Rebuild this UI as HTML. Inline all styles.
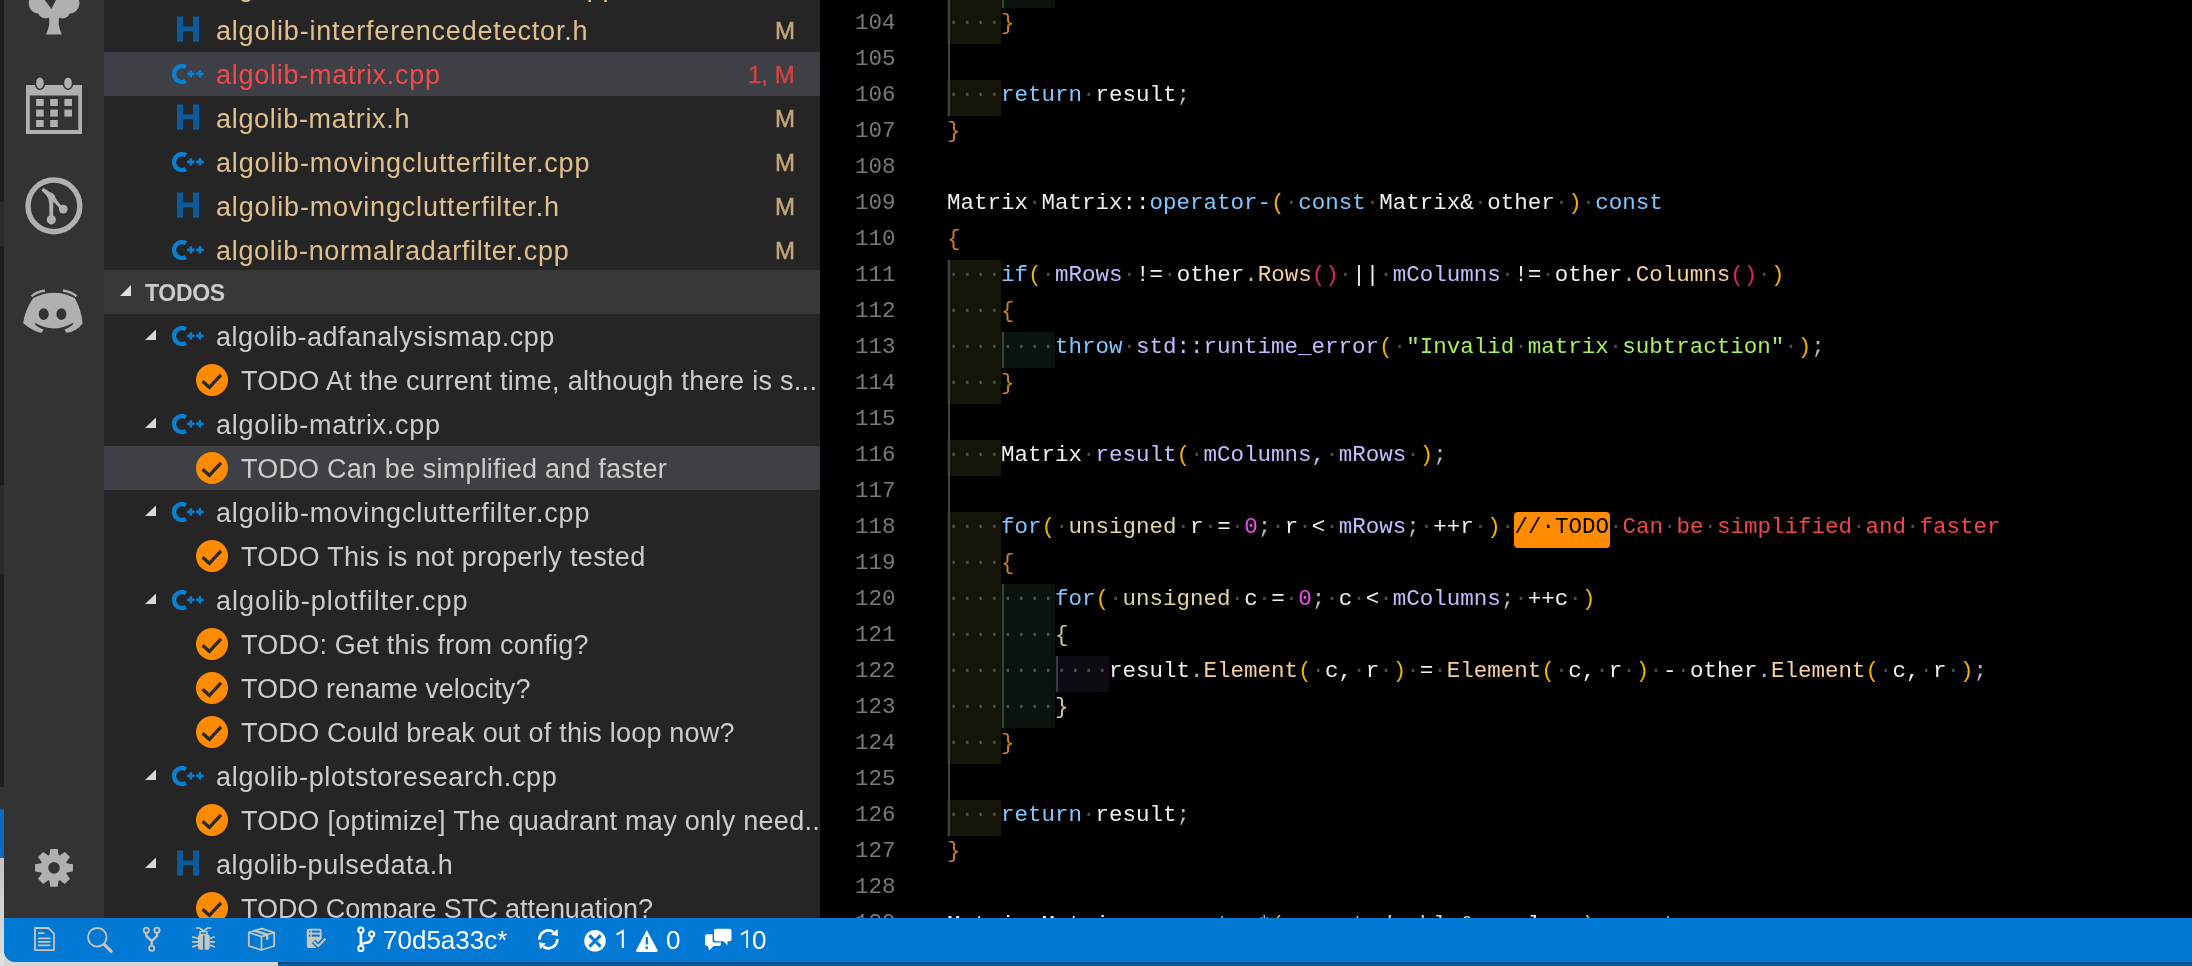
<!DOCTYPE html>
<html><head><meta charset="utf-8">
<style>
html,body{margin:0;padding:0;width:2192px;height:966px;overflow:hidden;background:#d6d6d6;}
*{box-sizing:border-box;}
#strip{position:absolute;left:0;top:0;width:4px;height:966px;background:#1e1e1e;}
#act{position:absolute;left:4px;top:0;width:100px;height:918px;background:#333333;}
#side{position:absolute;left:104px;top:0;width:716px;height:918px;background:#252526;overflow:hidden;}
#ed{position:absolute;left:820px;top:0;width:1372px;height:918px;background:#000;overflow:hidden;}
#status{position:absolute;left:4px;top:918px;width:2188px;height:44px;background:#0078d4;border-bottom-left-radius:11px;overflow:hidden;}
#under{position:absolute;left:278px;top:962px;width:1914px;height:4px;background:linear-gradient(#00426f 0px,#004f8a 1px,#005ea6 2px);}
.ic{position:absolute;}
svg{display:block;}
.cl,.tx,.ln,.bd,.ht,.st{will-change:transform;}
/* sidebar (coords relative to page, so subtract 104) */
#sidein{position:absolute;left:-104px;top:0;width:820px;height:918px;}
.sel{position:absolute;left:104px;width:716px;height:44px;background:#3f3f46;}
.tx{position:absolute;height:44px;line-height:44px;padding-top:0.5px;font-family:"Liberation Sans",sans-serif;font-size:27px;white-space:nowrap;}
.fn{color:#e2c08d;}
.red{color:#f04b4b;}
.tf,.tt{color:#cccccc;}
.bd{position:absolute;right:25px;height:44px;line-height:44px;padding-top:1px;font-family:"Liberation Sans",sans-serif;font-size:24px;color:#c4a676;white-space:nowrap;text-align:right;-webkit-text-stroke:0.5px currentColor;}
.redb{color:#cb4444;}
.hdr{position:absolute;left:104px;top:270px;width:716px;height:44px;background:#383838;}
.ht{position:absolute;left:40.5px;top:0;height:44px;line-height:44px;padding-top:1px;font-family:"Liberation Sans",sans-serif;font-size:23px;font-weight:bold;color:#cccccc;letter-spacing:-0.3px;}
/* editor */
#edin{position:absolute;left:-820px;top:0;width:2192px;height:918px;}
.ib{position:absolute;height:36px;}
.gd{position:absolute;width:2px;}
.ln{position:absolute;left:820px;width:75.5px;text-align:right;height:36px;line-height:36px;margin-top:-3px;font-family:"Liberation Mono",monospace;font-size:22.5px;color:#7a7a7a;}
.cl{position:absolute;left:947px;height:36px;line-height:36px;margin-top:-3px;font-family:"Liberation Mono",monospace;font-size:22.5px;white-space:pre;color:#f0f0f0;}
.ws{color:#4c4c4c;}
.tb{background:#ff8c00;color:#000;border-radius:4px;display:inline-block;height:36px;vertical-align:top;padding-right:1.5px;margin-right:-1.5px;}
.tb{position:relative;top:3px;line-height:31px;}
/* status bar */
.st{position:absolute;top:0;height:44px;line-height:44px;font-family:"Liberation Sans",sans-serif;font-size:26px;color:#ffffff;white-space:nowrap;}
</style></head>
<body>
<div id="strip">
  <div style="position:absolute;left:0;top:202px;width:4px;height:44px;background:#2c2c2a"></div>
  <div style="position:absolute;left:0;top:485px;width:4px;height:89px;background:#2a2a2a"></div>
  <div style="position:absolute;left:0;top:787px;width:4px;height:22px;background:#333333"></div>
  <div style="position:absolute;left:0;top:809px;width:4px;height:49px;background:#0a6cbf"></div>
  <div style="position:absolute;left:0;top:858px;width:4px;height:108px;background:linear-gradient(#c4c4c4,#e0e0e0)"></div>
</div>
<div id="under"></div>
<div id="act">
  <!-- tree icon (partially visible) -->
  <svg class="ic" style="left:0;top:0" width="100" height="40" viewBox="4 0 100 40">
    <g fill="#b0b0b0">
      <circle cx="38.8" cy="3.5" r="10.1"/>
      <circle cx="69.3" cy="3.5" r="10.1"/>
      <circle cx="45.5" cy="10.3" r="8.1"/>
      <circle cx="62.5" cy="10.3" r="8.1"/>
      <rect x="38" y="-8" width="32" height="18"/><rect x="46" y="8" width="16" height="9.5"/>
      <path d="M48.6 16.5 Q51 24 46 34.4 L61.8 34.4 Q57 24 59.4 16.5 Z"/>
    </g>
    <path fill="#333333" d="M43.9 -1 L56.4 -1 L51.5 8.9 Z"/>
  </svg>
  <!-- calendar -->
  <svg class="ic" style="left:0;top:70px" width="100" height="70" viewBox="4 70 100 70">
    <path fill="#b0b0b0" fill-rule="evenodd" d="M26 85h56v49.1h-56z M29.8 95.4v34.7h48.5v-34.7z"/>
    <rect x="36.1" y="99" width="7.6" height="7" fill="#b0b0b0"/>
    <rect x="50.2" y="99" width="7.6" height="7" fill="#b0b0b0"/>
    <rect x="64.4" y="99" width="7.6" height="7" fill="#b0b0b0"/>
    <rect x="36.1" y="109.6" width="7.6" height="7" fill="#b0b0b0"/>
    <rect x="50.2" y="109.6" width="7.6" height="7" fill="#b0b0b0"/>
    <rect x="64.4" y="109.6" width="7.6" height="7" fill="#b0b0b0"/>
    <rect x="36.1" y="120" width="7.6" height="7" fill="#b0b0b0"/>
    <rect x="50.2" y="120" width="7.6" height="7" fill="#b0b0b0"/>
    <ellipse cx="39.9" cy="83" rx="5.3" ry="7" fill="#333333"/>
    <ellipse cx="68" cy="83" rx="5.3" ry="7" fill="#333333"/>
    <ellipse cx="39.9" cy="83" rx="3.8" ry="5.5" fill="#b0b0b0"/>
    <ellipse cx="68" cy="83" rx="3.8" ry="5.5" fill="#b0b0b0"/>
  </svg>
  <!-- circle Y icon -->
  <svg class="ic" style="left:0;top:170px" width="100" height="70" viewBox="4 170 100 70">
    <circle cx="53.9" cy="205.9" r="25.9" fill="none" stroke="#b0b0b0" stroke-width="5.4"/>
    <path fill="#b0b0b0" d="M41.6 190.5 Q42 187.8 44.2 188.3 L49.5 192 Q54.5 193.2 55.5 197.5 L57 200.5 L61 205.2 L64.5 207.2 L60.5 211.2 Q59 206.5 55 203.2 L53.2 201.8 L53.2 217 L49.4 217 L49.2 203.5 Q49 199 46.8 196 Z"/>
    <circle cx="51.3" cy="219.8" r="4.6" fill="#b0b0b0"/>
    <circle cx="63.3" cy="209.1" r="4.4" fill="#b0b0b0"/>
  </svg>
  <!-- discord -->
  <svg class="ic" style="left:0;top:280px" width="100" height="60" viewBox="4 280 100 60">
    <path fill="none" stroke="#b0b0b0" stroke-width="2.3" d="M31.5 296.3 Q36.5 291.8 45 290.5 M76.5 296.3 Q71.5 291.8 63 290.5"/>
    <path fill="#b0b0b0" stroke="#333333" stroke-width="1.1" fill-rule="evenodd" d="M33 297.5 C41 293.5 47 292.2 54 292.2 C61 292.2 67 293.5 75 297.5 C80 306 82.6 316 83.2 323.5 C80.5 327.5 74.5 332 66.5 333.6 L63.5 329.5 C67.5 328 71 326 73 323.5 C66.5 327.5 60.5 329 54 329 C47.5 329 41.5 327.5 35 323.5 C37 326 40.5 328 44.5 329.5 L41.5 333.6 C33.5 332 27.5 327.5 22.5 323.5 C23.5 316 27 306 33 297.5 Z M43.7 308.9 a4.5 5.3 0 1 0 0.01 0 Z M61.4 308.9 a4.5 5.3 0 1 0 0.01 0 Z"/>
  </svg>
  <!-- gear -->
  <svg class="ic" style="left:0;top:840px" width="100" height="60" viewBox="4 840 100 60">
    <path fill="#b0b0b0" fill-rule="evenodd" d="M49.40 855.10 L50.30 848.96 L57.70 848.96 L58.60 855.10 L59.80 855.60 L64.78 851.89 L70.01 857.12 L66.30 862.10 L66.80 863.30 L72.94 864.20 L72.94 871.60 L66.80 872.50 L66.30 873.70 L70.01 878.68 L64.78 883.91 L59.80 880.20 L58.60 880.70 L57.70 886.84 L50.30 886.84 L49.40 880.70 L48.20 880.20 L43.22 883.91 L37.99 878.68 L41.70 873.70 L41.20 872.50 L35.06 871.60 L35.06 864.20 L41.20 863.30 L41.70 862.10 L37.99 857.12 L43.22 851.89 L48.20 855.60 Z M59.8 867.9 A5.8 5.8 0 1 0 48.2 867.9 A5.8 5.8 0 1 0 59.8 867.9 Z"/>
  </svg>
</div>
<div id="side"><div id="sidein">
<div class="sel" style="top:52px"></div>
<div class="sel" style="top:446px"></div>
<svg class="ic" style="left:170px;top:-36px" width="40" height="44" viewBox="0 0 40 44"><path fill="none" stroke="#0a7fd0" stroke-width="4.5" d="M15.95 15.26 A7.9 7.9 0 1 0 15.95 28.94"/><path fill="#0a7fd0" d="M17.1 20.6h2.4v-2.4h2.6v2.4h2.4v2.6h-2.4v2.4h-2.6v-2.4h-2.4z M26.2 20.6h2.4v-2.4h2.6v2.4h2.4v2.6h-2.4v2.4h-2.6v-2.4h-2.4z"/></svg>
<div class="tx fn" style="top:-36px;left:216px;letter-spacing:0.803px">algolib-interferencedetector.cpp</div>
<div class="bd" style="top:-36px">M</div>
<svg class="ic" style="left:170px;top:8px" width="36" height="44" viewBox="0 0 36 44"><path fill="#0b5b9c" d="M7 8.5h6v10h10v-10h6v25.2h-6v-10.4h-10v10.4h-6z"/></svg>
<div class="tx fn" style="top:8px;left:216px;letter-spacing:0.803px">algolib-interferencedetector.h</div>
<div class="bd" style="top:8px">M</div>
<svg class="ic" style="left:170px;top:52px" width="40" height="44" viewBox="0 0 40 44"><path fill="none" stroke="#0a7fd0" stroke-width="4.5" d="M15.95 15.26 A7.9 7.9 0 1 0 15.95 28.94"/><path fill="#0a7fd0" d="M17.1 20.6h2.4v-2.4h2.6v2.4h2.4v2.6h-2.4v2.4h-2.6v-2.4h-2.4z M26.2 20.6h2.4v-2.4h2.6v2.4h2.4v2.6h-2.4v2.4h-2.6v-2.4h-2.4z"/></svg>
<div class="tx fn red" style="top:52px;left:216px;letter-spacing:0.736px">algolib-matrix.cpp</div>
<div class="bd redb" style="top:52px">1, M</div>
<svg class="ic" style="left:170px;top:96px" width="36" height="44" viewBox="0 0 36 44"><path fill="#0b5b9c" d="M7 8.5h6v10h10v-10h6v25.2h-6v-10.4h-10v10.4h-6z"/></svg>
<div class="tx fn" style="top:96px;left:216px;letter-spacing:0.695px">algolib-matrix.h</div>
<div class="bd" style="top:96px">M</div>
<svg class="ic" style="left:170px;top:140px" width="40" height="44" viewBox="0 0 40 44"><path fill="none" stroke="#0a7fd0" stroke-width="4.5" d="M15.95 15.26 A7.9 7.9 0 1 0 15.95 28.94"/><path fill="#0a7fd0" d="M17.1 20.6h2.4v-2.4h2.6v2.4h2.4v2.6h-2.4v2.4h-2.6v-2.4h-2.4z M26.2 20.6h2.4v-2.4h2.6v2.4h2.4v2.6h-2.4v2.4h-2.6v-2.4h-2.4z"/></svg>
<div class="tx fn" style="top:140px;left:216px;letter-spacing:0.844px">algolib-movingclutterfilter.cpp</div>
<div class="bd" style="top:140px">M</div>
<svg class="ic" style="left:170px;top:184px" width="36" height="44" viewBox="0 0 36 44"><path fill="#0b5b9c" d="M7 8.5h6v10h10v-10h6v25.2h-6v-10.4h-10v10.4h-6z"/></svg>
<div class="tx fn" style="top:184px;left:216px;letter-spacing:0.834px">algolib-movingclutterfilter.h</div>
<div class="bd" style="top:184px">M</div>
<svg class="ic" style="left:170px;top:228px" width="40" height="44" viewBox="0 0 40 44"><path fill="none" stroke="#0a7fd0" stroke-width="4.5" d="M15.95 15.26 A7.9 7.9 0 1 0 15.95 28.94"/><path fill="#0a7fd0" d="M17.1 20.6h2.4v-2.4h2.6v2.4h2.4v2.6h-2.4v2.4h-2.6v-2.4h-2.4z M26.2 20.6h2.4v-2.4h2.6v2.4h2.4v2.6h-2.4v2.4h-2.6v-2.4h-2.4z"/></svg>
<div class="tx fn" style="top:228px;left:216px;letter-spacing:0.697px">algolib-normalradarfilter.cpp</div>
<div class="bd" style="top:228px">M</div>
<div class="hdr"><svg class="ic" style="left:15px;top:0" width="14" height="44" viewBox="0 0 14 44"><path fill="#e0e0e0" d="M12 15V26H1z"/></svg><span class="ht">TODOS</span></div>
<svg class="ic" style="left:144px;top:314px" width="14" height="44" viewBox="0 0 14 44"><path fill="#d8d8d8" d="M12 15.4V26H1z"/></svg>
<svg class="ic" style="left:170px;top:314px" width="40" height="44" viewBox="0 0 40 44"><path fill="none" stroke="#0a7fd0" stroke-width="4.5" d="M15.95 15.26 A7.9 7.9 0 1 0 15.95 28.94"/><path fill="#0a7fd0" d="M17.1 20.6h2.4v-2.4h2.6v2.4h2.4v2.6h-2.4v2.4h-2.6v-2.4h-2.4z M26.2 20.6h2.4v-2.4h2.6v2.4h2.4v2.6h-2.4v2.4h-2.6v-2.4h-2.4z"/></svg>
<div class="tx tf" style="top:314px;left:216px;letter-spacing:0.504px">algolib-adfanalysismap.cpp</div>
<svg class="ic" style="left:194px;top:358px" width="36" height="44" viewBox="0 0 36 44"><circle cx="18" cy="22" r="16" fill="#ff8c00"/><path fill="none" stroke="#2b2b2b" stroke-width="3.4" d="M8.6 23.2 L15.4 29.4 L27 16.8"/></svg>
<div class="tx tt" style="top:358px;left:241px;letter-spacing:0.29px">TODO At the current time, although there is s...</div>
<svg class="ic" style="left:144px;top:402px" width="14" height="44" viewBox="0 0 14 44"><path fill="#d8d8d8" d="M12 15.4V26H1z"/></svg>
<svg class="ic" style="left:170px;top:402px" width="40" height="44" viewBox="0 0 40 44"><path fill="none" stroke="#0a7fd0" stroke-width="4.5" d="M15.95 15.26 A7.9 7.9 0 1 0 15.95 28.94"/><path fill="#0a7fd0" d="M17.1 20.6h2.4v-2.4h2.6v2.4h2.4v2.6h-2.4v2.4h-2.6v-2.4h-2.4z M26.2 20.6h2.4v-2.4h2.6v2.4h2.4v2.6h-2.4v2.4h-2.6v-2.4h-2.4z"/></svg>
<div class="tx tf" style="top:402px;left:216px;letter-spacing:0.736px">algolib-matrix.cpp</div>
<svg class="ic" style="left:194px;top:446px" width="36" height="44" viewBox="0 0 36 44"><circle cx="18" cy="22" r="16" fill="#ff8c00"/><path fill="none" stroke="#2b2b2b" stroke-width="3.4" d="M8.6 23.2 L15.4 29.4 L27 16.8"/></svg>
<div class="tx tt" style="top:446px;left:241px;letter-spacing:0.191px">TODO Can be simplified and faster</div>
<svg class="ic" style="left:144px;top:490px" width="14" height="44" viewBox="0 0 14 44"><path fill="#d8d8d8" d="M12 15.4V26H1z"/></svg>
<svg class="ic" style="left:170px;top:490px" width="40" height="44" viewBox="0 0 40 44"><path fill="none" stroke="#0a7fd0" stroke-width="4.5" d="M15.95 15.26 A7.9 7.9 0 1 0 15.95 28.94"/><path fill="#0a7fd0" d="M17.1 20.6h2.4v-2.4h2.6v2.4h2.4v2.6h-2.4v2.4h-2.6v-2.4h-2.4z M26.2 20.6h2.4v-2.4h2.6v2.4h2.4v2.6h-2.4v2.4h-2.6v-2.4h-2.4z"/></svg>
<div class="tx tf" style="top:490px;left:216px;letter-spacing:0.844px">algolib-movingclutterfilter.cpp</div>
<svg class="ic" style="left:194px;top:534px" width="36" height="44" viewBox="0 0 36 44"><circle cx="18" cy="22" r="16" fill="#ff8c00"/><path fill="none" stroke="#2b2b2b" stroke-width="3.4" d="M8.6 23.2 L15.4 29.4 L27 16.8"/></svg>
<div class="tx tt" style="top:534px;left:241px;letter-spacing:0.34px">TODO This is not properly tested</div>
<svg class="ic" style="left:144px;top:578px" width="14" height="44" viewBox="0 0 14 44"><path fill="#d8d8d8" d="M12 15.4V26H1z"/></svg>
<svg class="ic" style="left:170px;top:578px" width="40" height="44" viewBox="0 0 40 44"><path fill="none" stroke="#0a7fd0" stroke-width="4.5" d="M15.95 15.26 A7.9 7.9 0 1 0 15.95 28.94"/><path fill="#0a7fd0" d="M17.1 20.6h2.4v-2.4h2.6v2.4h2.4v2.6h-2.4v2.4h-2.6v-2.4h-2.4z M26.2 20.6h2.4v-2.4h2.6v2.4h2.4v2.6h-2.4v2.4h-2.6v-2.4h-2.4z"/></svg>
<div class="tx tf" style="top:578px;left:216px;letter-spacing:0.969px">algolib-plotfilter.cpp</div>
<svg class="ic" style="left:194px;top:622px" width="36" height="44" viewBox="0 0 36 44"><circle cx="18" cy="22" r="16" fill="#ff8c00"/><path fill="none" stroke="#2b2b2b" stroke-width="3.4" d="M8.6 23.2 L15.4 29.4 L27 16.8"/></svg>
<div class="tx tt" style="top:622px;left:241px;letter-spacing:0.226px">TODO: Get this from config?</div>
<svg class="ic" style="left:194px;top:666px" width="36" height="44" viewBox="0 0 36 44"><circle cx="18" cy="22" r="16" fill="#ff8c00"/><path fill="none" stroke="#2b2b2b" stroke-width="3.4" d="M8.6 23.2 L15.4 29.4 L27 16.8"/></svg>
<div class="tx tt" style="top:666px;left:241px;letter-spacing:0.015px">TODO rename velocity?</div>
<svg class="ic" style="left:194px;top:710px" width="36" height="44" viewBox="0 0 36 44"><circle cx="18" cy="22" r="16" fill="#ff8c00"/><path fill="none" stroke="#2b2b2b" stroke-width="3.4" d="M8.6 23.2 L15.4 29.4 L27 16.8"/></svg>
<div class="tx tt" style="top:710px;left:241px;letter-spacing:0.209px">TODO Could break out of this loop now?</div>
<svg class="ic" style="left:144px;top:754px" width="14" height="44" viewBox="0 0 14 44"><path fill="#d8d8d8" d="M12 15.4V26H1z"/></svg>
<svg class="ic" style="left:170px;top:754px" width="40" height="44" viewBox="0 0 40 44"><path fill="none" stroke="#0a7fd0" stroke-width="4.5" d="M15.95 15.26 A7.9 7.9 0 1 0 15.95 28.94"/><path fill="#0a7fd0" d="M17.1 20.6h2.4v-2.4h2.6v2.4h2.4v2.6h-2.4v2.4h-2.6v-2.4h-2.4z M26.2 20.6h2.4v-2.4h2.6v2.4h2.4v2.6h-2.4v2.4h-2.6v-2.4h-2.4z"/></svg>
<div class="tx tf" style="top:754px;left:216px;letter-spacing:0.697px">algolib-plotstoresearch.cpp</div>
<svg class="ic" style="left:194px;top:798px" width="36" height="44" viewBox="0 0 36 44"><circle cx="18" cy="22" r="16" fill="#ff8c00"/><path fill="none" stroke="#2b2b2b" stroke-width="3.4" d="M8.6 23.2 L15.4 29.4 L27 16.8"/></svg>
<div class="tx tt" style="top:798px;left:241px;letter-spacing:0.29px">TODO [optimize] The quadrant may only need...</div>
<svg class="ic" style="left:144px;top:842px" width="14" height="44" viewBox="0 0 14 44"><path fill="#d8d8d8" d="M12 15.4V26H1z"/></svg>
<svg class="ic" style="left:170px;top:842px" width="36" height="44" viewBox="0 0 36 44"><path fill="#0b5b9c" d="M7 8.5h6v10h10v-10h6v25.2h-6v-10.4h-10v10.4h-6z"/></svg>
<div class="tx tf" style="top:842px;left:216px;letter-spacing:0.563px">algolib-pulsedata.h</div>
<svg class="ic" style="left:194px;top:886px" width="36" height="44" viewBox="0 0 36 44"><circle cx="18" cy="22" r="16" fill="#ff8c00"/><path fill="none" stroke="#2b2b2b" stroke-width="3.4" d="M8.6 23.2 L15.4 29.4 L27 16.8"/></svg>
<div class="tx tt" style="top:886px;left:241px;letter-spacing:-0.057px">TODO Compare STC attenuation?</div>
</div></div>
<div id="ed"><div id="edin">
<div class="ib" style="left:947.0px;top:-28px;width:54.0px;background:#15150a"></div>
<div class="ib" style="left:1001.0px;top:-28px;width:54.0px;background:#0a120c"></div>
<div class="ib" style="left:947.0px;top:8px;width:54.0px;background:#15150a"></div>
<div class="ib" style="left:947.0px;top:80px;width:54.0px;background:#15150a"></div>
<div class="ib" style="left:947.0px;top:260px;width:54.0px;background:#15150a"></div>
<div class="ib" style="left:947.0px;top:296px;width:54.0px;background:#15150a"></div>
<div class="ib" style="left:947.0px;top:332px;width:54.0px;background:#15150a"></div>
<div class="ib" style="left:1001.0px;top:332px;width:54.0px;background:#0a120c"></div>
<div class="ib" style="left:947.0px;top:368px;width:54.0px;background:#15150a"></div>
<div class="ib" style="left:947.0px;top:440px;width:54.0px;background:#15150a"></div>
<div class="ib" style="left:947.0px;top:512px;width:54.0px;background:#15150a"></div>
<div class="ib" style="left:947.0px;top:548px;width:54.0px;background:#15150a"></div>
<div class="ib" style="left:947.0px;top:584px;width:54.0px;background:#15150a"></div>
<div class="ib" style="left:1001.0px;top:584px;width:54.0px;background:#0a120c"></div>
<div class="ib" style="left:947.0px;top:620px;width:54.0px;background:#15150a"></div>
<div class="ib" style="left:1001.0px;top:620px;width:54.0px;background:#0a120c"></div>
<div class="ib" style="left:947.0px;top:656px;width:54.0px;background:#15150a"></div>
<div class="ib" style="left:1001.0px;top:656px;width:54.0px;background:#0a120c"></div>
<div class="ib" style="left:1055.0px;top:656px;width:54.0px;background:#100a12"></div>
<div class="ib" style="left:947.0px;top:692px;width:54.0px;background:#15150a"></div>
<div class="ib" style="left:1001.0px;top:692px;width:54.0px;background:#0a120c"></div>
<div class="ib" style="left:947.0px;top:728px;width:54.0px;background:#15150a"></div>
<div class="ib" style="left:947.0px;top:800px;width:54.0px;background:#15150a"></div>
<div class="gd" style="left:948.0px;top:-28px;height:144px;background:#45453a"></div>
<div class="gd" style="left:948.0px;top:260px;height:576px;background:#45453a"></div>
<div class="gd" style="left:1002.0px;top:-28px;height:36px;background:#34443f"></div>
<div class="gd" style="left:1002.0px;top:332px;height:36px;background:#34443f"></div>
<div class="gd" style="left:1002.0px;top:584px;height:144px;background:#34443f"></div>
<div class="gd" style="left:1056.0px;top:656px;height:36px;background:#3a3848"></div>
<div class="ln" style="top:-28px">103</div>
<div class="cl" style="top:-28px"><span class="ws">········</span><span style="color:#d0c898">}</span></div>
<div class="ln" style="top:8px">104</div>
<div class="cl" style="top:8px"><span class="ws">····</span><span style="color:#c8802f">}</span></div>
<div class="ln" style="top:44px">105</div>
<div class="cl" style="top:44px"></div>
<div class="ln" style="top:80px">106</div>
<div class="cl" style="top:80px"><span class="ws">····</span><span style="color:#80c8ff">return</span><span class="ws">·</span><span style="color:#f0f0f0">result</span><span style="color:#b8b8b8">;</span></div>
<div class="ln" style="top:116px">107</div>
<div class="cl" style="top:116px"><span style="color:#c8802f">}</span></div>
<div class="ln" style="top:152px">108</div>
<div class="cl" style="top:152px"></div>
<div class="ln" style="top:188px">109</div>
<div class="cl" style="top:188px"><span style="color:#f0f0f0">Matrix</span><span class="ws">·</span><span style="color:#f0f0f0">Matrix::</span><span style="color:#80c8ff">operator-</span><span style="color:#f0b400">(</span><span class="ws">·</span><span style="color:#80c8ff">const</span><span class="ws">·</span><span style="color:#f0f0f0">Matrix&amp;</span><span class="ws">·</span><span style="color:#f0f0f0">other</span><span class="ws">·</span><span style="color:#f0b400">)</span><span class="ws">·</span><span style="color:#80c8ff">const</span></div>
<div class="ln" style="top:224px">110</div>
<div class="cl" style="top:224px"><span style="color:#c8802f">{</span></div>
<div class="ln" style="top:260px">111</div>
<div class="cl" style="top:260px"><span class="ws">····</span><span style="color:#80c8ff">if</span><span style="color:#f0b400">(</span><span class="ws">·</span><span style="color:#c0c0ff">mRows</span><span class="ws">·</span><span style="color:#f0f0f0">!=</span><span class="ws">·</span><span style="color:#f0f0f0">other</span><span style="color:#b8b8b8">.</span><span style="color:#f8d0a0">Rows</span><span style="color:#e0207a">()</span><span class="ws">·</span><span style="color:#f0f0f0">||</span><span class="ws">·</span><span style="color:#c0c0ff">mColumns</span><span class="ws">·</span><span style="color:#f0f0f0">!=</span><span class="ws">·</span><span style="color:#f0f0f0">other</span><span style="color:#b8b8b8">.</span><span style="color:#f8d0a0">Columns</span><span style="color:#e0207a">()</span><span class="ws">·</span><span style="color:#f0b400">)</span></div>
<div class="ln" style="top:296px">112</div>
<div class="cl" style="top:296px"><span class="ws">····</span><span style="color:#c8802f">{</span></div>
<div class="ln" style="top:332px">113</div>
<div class="cl" style="top:332px"><span class="ws">········</span><span style="color:#80c8ff">throw</span><span class="ws">·</span><span style="color:#c0c0ff">std::runtime_error</span><span style="color:#f0b400">(</span><span class="ws">·</span><span style="color:#a8f060">&quot;Invalid<span class="ws">·</span>matrix<span class="ws">·</span>subtraction&quot;</span><span class="ws">·</span><span style="color:#f0b400">)</span><span style="color:#b8b8b8">;</span></div>
<div class="ln" style="top:368px">114</div>
<div class="cl" style="top:368px"><span class="ws">····</span><span style="color:#c8802f">}</span></div>
<div class="ln" style="top:404px">115</div>
<div class="cl" style="top:404px"></div>
<div class="ln" style="top:440px">116</div>
<div class="cl" style="top:440px"><span class="ws">····</span><span style="color:#f0f0f0">Matrix</span><span class="ws">·</span><span style="color:#c0c0ff">result</span><span style="color:#f0b400">(</span><span class="ws">·</span><span style="color:#c0c0ff">mColumns,</span><span class="ws">·</span><span style="color:#c0c0ff">mRows</span><span class="ws">·</span><span style="color:#f0b400">)</span><span style="color:#b8b8b8">;</span></div>
<div class="ln" style="top:476px">117</div>
<div class="cl" style="top:476px"></div>
<div class="ln" style="top:512px">118</div>
<div class="cl" style="top:512px"><span class="ws">····</span><span style="color:#80c8ff">for</span><span style="color:#f0b400">(</span><span class="ws">·</span><span style="color:#e0d8a0">unsigned</span><span class="ws">·</span><span style="color:#f0f0f0">r</span><span class="ws">·</span><span style="color:#f0f0f0">=</span><span class="ws">·</span><span style="color:#f050f0">0</span><span style="color:#b8b8b8">;</span><span class="ws">·</span><span style="color:#f0f0f0">r</span><span class="ws">·</span><span style="color:#f0f0f0">&lt;</span><span class="ws">·</span><span style="color:#c0c0ff">mRows</span><span style="color:#b8b8b8">;</span><span class="ws">·</span><span style="color:#f0f0f0">++r</span><span class="ws">·</span><span style="color:#f0b400">)</span><span class="ws">·</span><span class="tb">//·TODO</span><span class="ws">·</span><span style="color:#f04848">Can<span class="ws">·</span>be<span class="ws">·</span>simplified<span class="ws">·</span>and<span class="ws">·</span>faster</span></div>
<div class="ln" style="top:548px">119</div>
<div class="cl" style="top:548px"><span class="ws">····</span><span style="color:#c8802f">{</span></div>
<div class="ln" style="top:584px">120</div>
<div class="cl" style="top:584px"><span class="ws">········</span><span style="color:#80c8ff">for</span><span style="color:#f0b400">(</span><span class="ws">·</span><span style="color:#e0d8a0">unsigned</span><span class="ws">·</span><span style="color:#f0f0f0">c</span><span class="ws">·</span><span style="color:#f0f0f0">=</span><span class="ws">·</span><span style="color:#f050f0">0</span><span style="color:#b8b8b8">;</span><span class="ws">·</span><span style="color:#f0f0f0">c</span><span class="ws">·</span><span style="color:#f0f0f0">&lt;</span><span class="ws">·</span><span style="color:#c0c0ff">mColumns</span><span style="color:#b8b8b8">;</span><span class="ws">·</span><span style="color:#f0f0f0">++c</span><span class="ws">·</span><span style="color:#f0b400">)</span></div>
<div class="ln" style="top:620px">121</div>
<div class="cl" style="top:620px"><span class="ws">········</span><span style="color:#d0c898">{</span></div>
<div class="ln" style="top:656px">122</div>
<div class="cl" style="top:656px"><span class="ws">············</span><span style="color:#f0f0f0">result</span><span style="color:#b8b8b8">.</span><span style="color:#f8d0a0">Element</span><span style="color:#f0b400">(</span><span class="ws">·</span><span style="color:#f0f0f0">c,</span><span class="ws">·</span><span style="color:#f0f0f0">r</span><span class="ws">·</span><span style="color:#f0b400">)</span><span class="ws">·</span><span style="color:#f0f0f0">=</span><span class="ws">·</span><span style="color:#f8d0a0">Element</span><span style="color:#f0b400">(</span><span class="ws">·</span><span style="color:#f0f0f0">c,</span><span class="ws">·</span><span style="color:#f0f0f0">r</span><span class="ws">·</span><span style="color:#f0b400">)</span><span class="ws">·</span><span style="color:#f0f0f0">-</span><span class="ws">·</span><span style="color:#f0f0f0">other</span><span style="color:#b8b8b8">.</span><span style="color:#f8d0a0">Element</span><span style="color:#f0b400">(</span><span class="ws">·</span><span style="color:#f0f0f0">c,</span><span class="ws">·</span><span style="color:#f0f0f0">r</span><span class="ws">·</span><span style="color:#f0b400">)</span><span style="color:#b8b8b8">;</span></div>
<div class="ln" style="top:692px">123</div>
<div class="cl" style="top:692px"><span class="ws">········</span><span style="color:#d0c898">}</span></div>
<div class="ln" style="top:728px">124</div>
<div class="cl" style="top:728px"><span class="ws">····</span><span style="color:#c8802f">}</span></div>
<div class="ln" style="top:764px">125</div>
<div class="cl" style="top:764px"></div>
<div class="ln" style="top:800px">126</div>
<div class="cl" style="top:800px"><span class="ws">····</span><span style="color:#80c8ff">return</span><span class="ws">·</span><span style="color:#f0f0f0">result</span><span style="color:#b8b8b8">;</span></div>
<div class="ln" style="top:836px">127</div>
<div class="cl" style="top:836px"><span style="color:#c8802f">}</span></div>
<div class="ln" style="top:872px">128</div>
<div class="cl" style="top:872px"></div>
<div class="ln" style="top:908px">129</div>
<div class="cl" style="top:908px;margin-top:-1px"><span style="color:#f0f0f0">Matrix</span><span class="ws">·</span><span style="color:#f0f0f0">Matrix::</span><span style="color:#80c8ff">operator*</span><span style="color:#f0b400">(</span><span class="ws">·</span><span style="color:#80c8ff">const</span><span class="ws">·</span><span style="color:#e0d8a0">double&amp;</span><span class="ws">·</span><span style="color:#f0f0f0">scalar</span><span class="ws">·</span><span style="color:#f0b400">)</span><span class="ws">·</span><span style="color:#80c8ff">const</span></div>
</div></div>
<div id="status"><div style="position:absolute;left:-4px;top:-918px;width:2192px;height:966px;">
  <svg class="ic" style="left:0;top:918px" width="800" height="44" viewBox="0 918 800 44">
    <g fill="none" stroke="#c9c5c0" stroke-width="1.8">
      <path d="M35 928 H48.4 L54 933.6 V950.1 H35 Z" stroke-linejoin="round"/>
      <path d="M38 933.2 H44.3 M38 938.4 H50.5 M38 941.9 H50.5 M38 945.4 H50.5"/>
      <circle cx="97.3" cy="937.3" r="9.3"/>
      <path d="M104.2 944.4 L111.2 951.4" stroke-width="3" stroke-linecap="round"/>
      <circle cx="146.3" cy="930.3" r="2.6"/>
      <circle cx="157" cy="930.3" r="2.6"/>
      <circle cx="151.7" cy="948.3" r="2.6"/>
      <path d="M146.3 933 V936 L151.7 941 L157 936 V933 M151.7 941 V945.7" stroke-width="2.4"/>
      <path d="M248.8 932.5 L261.5 928.6 L274.2 932.5 V946 L261.5 950 L248.8 946 Z M248.8 932.5 L261.5 936.6 L274.2 932.5 M261.5 936.6 V950" stroke-linejoin="round"/>
      <path d="M254.5 930.6 L267.2 934.6 V939.7" stroke-width="2.4"/>
    </g>
    <g fill="#c9c5c0">
      <path d="M197.9 936.5 Q197.9 934.4 200 934.4 H203 V949.8 H200.5 Q197.9 949.8 197.9 947 Z M204.6 934.4 H207.6 Q209.8 934.4 209.8 936.5 V947 Q209.8 949.8 207.2 949.8 H204.6 Z"/>
      <rect x="200" y="931.6" width="6.9" height="3" fill="none" stroke="#c9c5c0" stroke-width="1.5"/>
      <path d="M195.9 928 H199.6 L203.5 931 L207.6 928 H211.3 M192.1 936.8 L198 938.5 M192.1 941.9 H198 M192.1 947 L198 945 M214.9 936.8 L209.8 938.5 M214.9 941.9 H209.8 M214.9 947 L209.8 945" stroke="#c9c5c0" stroke-width="1.7" fill="none"/>
      <path d="M306.8 930.6 Q306.8 928.8 308.6 928.8 H319.8 Q321.6 928.8 321.6 930.6 V939 L316 944.5 V948 H308.6 Q306.8 948 306.8 946.2 Z"/>
      <rect x="309" y="930.6" width="1.3" height="2" fill="#0078d4"/>
      <rect x="311.8" y="930.6" width="8" height="2" fill="#0078d4"/>
      <rect x="309" y="934.6" width="1.3" height="2" fill="#0078d4"/>
      <rect x="311.8" y="934.6" width="8" height="2" fill="#0078d4"/>
      <path d="M313.5 941.5 L318.3 946 L326 938.3" fill="none" stroke="#0078d4" stroke-width="5"/>
      <path d="M313.8 941.8 L318.3 946 L325.5 938.8" fill="none" stroke="#c9c5c0" stroke-width="2"/>
    </g>
    <g fill="none" stroke="#ffffff" stroke-width="2">
      <circle cx="360.9" cy="930.1" r="2.6"/>
      <circle cx="371.7" cy="934" r="2.6"/>
      <circle cx="360.9" cy="948.4" r="2.6"/>
      <path d="M360.9 932.7 V945.8" stroke-width="2.6"/>
      <path d="M371.7 936.6 V938 Q371.7 942.5 365 943 Q361.5 943.5 361 945.6" stroke-width="2.6"/>
    </g>
    <g fill="none" stroke="#ffffff" stroke-width="2.7">
      <path d="M539.55 939.6 A8.85 8.85 0 0 1 553.5 932.05"/>
      <path d="M557.25 939 A8.85 8.85 0 0 1 543.3 946.55"/>
    </g>
    <g fill="#ffffff">
      <path d="M557.5 929.1 L558.1 935.9 L551 934.8 Z"/>
      <path d="M540.2 949.2 L538.9 942.2 L545.8 943.5 Z"/>
      <circle cx="595" cy="940.8" r="10.8"/>
      <path d="M636 950.5 L646.8 930 L657.7 950.5 Q657.7 952 656 952 H637.7 Q636 952 636 950.5 Z"/>
      <path d="M716 928.7 Q714 928.7 714 930.7 V939.2 Q714 941.2 716 941.2 H723.5 L727.5 945.5 V941.2 H729.5 Q731.5 941.2 731.5 939.2 V930.7 Q731.5 928.7 729.5 928.7 Z"/>
      <path d="M707 934.2 Q705 934.2 705 936.2 V943.9 Q705 945.9 707 945.9 H707.8 L709.3 950.6 L713.5 945.9 H719 Q721 945.9 721 943.9 V942.6 H714.5 Q712.6 942.6 712.6 940.6 V934.2 Z"/>
    </g>
    <path d="M589.4 935.4 L600.6 946.6 M600.6 935.4 L589.4 946.6" stroke="#0078d4" stroke-width="2.9"/>
    <path d="M646.8 937 V944.5 M646.8 946.5 V949" stroke="#0078d4" stroke-width="2.2"/>
  </svg>
  <div class="st" style="left:383px;top:918px">70d5a33c*</div>
  <svg class="ic" style="left:610px;top:918px" width="20" height="44" viewBox="610 918 20 44"><path d="M616.5 934.6 L622.8 931 V948" fill="none" stroke="#fff" stroke-width="2"/></svg>
  <div class="st" style="left:666px;top:918px">0</div>
  <svg class="ic" style="left:736px;top:918px" width="12" height="44" viewBox="736 918 12 44"><path d="M741 934.6 L747.3 931 V948" fill="none" stroke="#fff" stroke-width="2"/></svg><div class="st" style="left:751.5px;top:918px">0</div>
</div></div>
</body></html>
